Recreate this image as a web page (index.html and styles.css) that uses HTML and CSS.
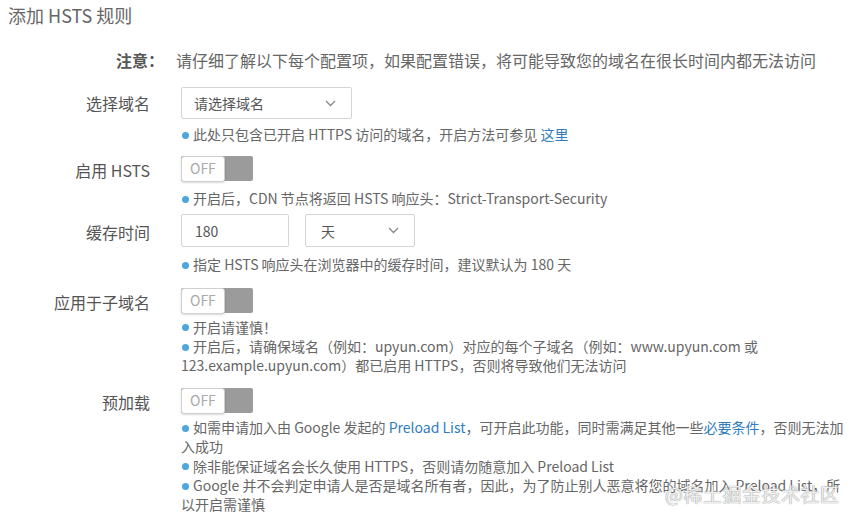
FILE: index.html
```html
<!DOCTYPE html>
<html lang="zh-CN">
<head>
    <meta charset="UTF-8">
    <meta name="viewport" content="width=device-width, initial-scale=1.0">
    <title>添加 HSTS 规则</title>
    <link rel="stylesheet" href="styles.css">
</head>
<body>
    <div class="page">
        <h1 class="page-title">添加 HSTS 规则</h1>

        <div class="notice">
            <span class="notice-label">注意：</span>
            <span class="notice-text">请仔细了解以下每个配置项，如果配置错误，将可能导致您的域名在很长时间内都无法访问</span>
        </div>

        <div class="form-item item-first">
            <label class="form-label label-select">选择域名</label>
            <div class="form-body">
                <div class="select select-domain">
                    <span class="select-value">请选择域名</span>
                    <svg class="chevron" width="11" height="7" viewBox="0 0 11 7"><polyline points="1,1 5.5,5.5 10,1" fill="none" stroke="#888" stroke-width="1.3"/></svg>
                </div>
                <p class="hint"><span class="dot"></span>此处只包含已开启 HTTPS 访问的域名，开启方法可参见 <a href="#">这里</a></p>
            </div>
        </div>

        <div class="form-item item-hsts">
            <label class="form-label label-switch">启用 HSTS</label>
            <div class="form-body">
                <div class="switch"><span class="switch-knob">OFF</span></div>
                <p class="hint"><span class="dot"></span>开启后，CDN 节点将返回 HSTS 响应头：Strict-Transport-Security</p>
            </div>
        </div>

        <div class="form-item item-input">
            <label class="form-label label-input">缓存时间</label>
            <div class="form-body">
                <div class="input-group">
                    <div class="input">180</div>
                    <div class="select select-unit">
                        <span class="select-value">天</span>
                        <svg class="chevron" width="11" height="7" viewBox="0 0 11 7"><polyline points="1,1 5.5,5.5 10,1" fill="none" stroke="#888" stroke-width="1.3"/></svg>
                    </div>
                </div>
                <p class="hint"><span class="dot"></span>指定 HSTS 响应头在浏览器中的缓存时间，建议默认为 180 天</p>
            </div>
        </div>

        <div class="form-item">
            <label class="form-label label-switch">应用于子域名</label>
            <div class="form-body">
                <div class="switch"><span class="switch-knob">OFF</span></div>
                <p class="hint"><span class="dot"></span>开启请谨慎！</p>
                <p class="hint"><span class="dot"></span>开启后，请确保域名（例如：upyun.com）对应的每个子域名（例如：www.upyun.com 或 123.example.upyun.com）都已启用 HTTPS，否则将导致他们无法访问</p>
            </div>
        </div>

        <div class="form-item">
            <label class="form-label label-switch">预加载</label>
            <div class="form-body">
                <div class="switch"><span class="switch-knob">OFF</span></div>
                <p class="hint"><span class="dot"></span>如需申请加入由 Google 发起的 <a href="#">Preload List</a>，可开启此功能，同时需满足其他一些<a href="#">必要条件</a>，否则无法加入成功</p>
                <p class="hint"><span class="dot"></span>除非能保证域名会长久使用 HTTPS，否则请勿随意加入 Preload List</p>
                <p class="hint"><span class="dot"></span>Google 并不会判定申请人是否是域名所有者，因此，为了防止别人恶意将您的域名加入 Preload List，所以开启需谨慎</p>
            </div>
        </div>
    </div>

    <div class="watermark">@稀土掘金技术社区</div>
</body>
</html>
```

FILE: styles.css
```css
body {
    margin: 0;
    font-family: "Noto Sans CJK SC", "Noto Sans", sans-serif;
    color: #666;
    background: #fff;
    overflow: hidden;
}

.page {
    width: 848px;
}

.page-title {
    margin: 0;
    padding-left: 8px;
    font-size: 18px;
    font-weight: normal;
    line-height: 30px;
    color: #666;
}

.notice {
    display: flex;
    margin-top: 18px;
    line-height: 24px;
    font-size: 16px;
}

.notice-label {
    width: 164px;
    text-align: right;
    font-weight: bold;
    color: #555;
    margin-right: 12px;
}

.notice-text {
    color: #666;
    white-space: nowrap;
}

.form-item {
    display: flex;
    margin-top: 13px;
}

.item-first {
    margin-top: 15px;
}

.item-hsts {
    margin-top: 12px;
}

.item-input {
    margin-top: 6px;
}

.form-label {
    width: 150px;
    flex-shrink: 0;
    text-align: right;
    margin-right: 31px;
    font-size: 16px;
    color: #555;
}

.label-select {
    line-height: 32px;
}

.label-switch {
    line-height: 29px;
}

.label-input {
    line-height: 37px;
}

.form-body {
    flex: 1;
}

.select,
.input {
    box-sizing: border-box;
    display: flex;
    align-items: center;
    border: 1px solid #d5d5d5;
    border-radius: 2px;
    background: #fff;
    font-size: 14px;
    color: #555;
}

.select {
    justify-content: space-between;
}

.select-domain {
    width: 171px;
    height: 32px;
    padding: 0 15px 0 12px;
}

.input-group {
    display: flex;
    gap: 16px;
}

.input {
    width: 108px;
    height: 33px;
    padding-left: 13px;
}

.select-unit {
    width: 110px;
    height: 33px;
    padding: 0 15px 0 15px;
}

.hint {
    margin: 0;
    font-size: 14px;
    line-height: 19.2px;
    color: #666;
}

.form-body > .select + .hint {
    margin-top: 6px;
}

.form-body > .switch + .hint {
    margin-top: 5px;
}

.item-hsts .switch + .hint,
.form-body > .input-group + .hint {
    margin-top: 8px;
}

.dot {
    display: inline-block;
    width: 7px;
    height: 7px;
    border-radius: 50%;
    background: #4ea7dc;
    margin: 0 4px 2px 1px;
    vertical-align: middle;
}

.hint a {
    color: #2f7dbf;
    text-decoration: none;
}

.switch {
    display: flex;
    width: 72px;
    height: 25px;
    background: #9b9b9b;
    border-radius: 2px;
}

.switch-knob {
    box-sizing: border-box;
    width: 44px;
    height: 26px;
    border: 1px solid #cfcfcf;
    border-radius: 3px;
    background: #fff;
    box-shadow: 0 1px 2px rgba(0, 0, 0, 0.15);
    font-size: 14px;
    line-height: 22px;
    padding-left: 8px;
    color: #aaa;
}

.watermark {
    position: absolute;
    left: 665px;
    top: 480px;
    font-size: 19px;
    color: rgba(255, 255, 255, 0.85);
    text-shadow: 0 0 1px #999, 0 0 1px #999;
    letter-spacing: 0.5px;
}
```
